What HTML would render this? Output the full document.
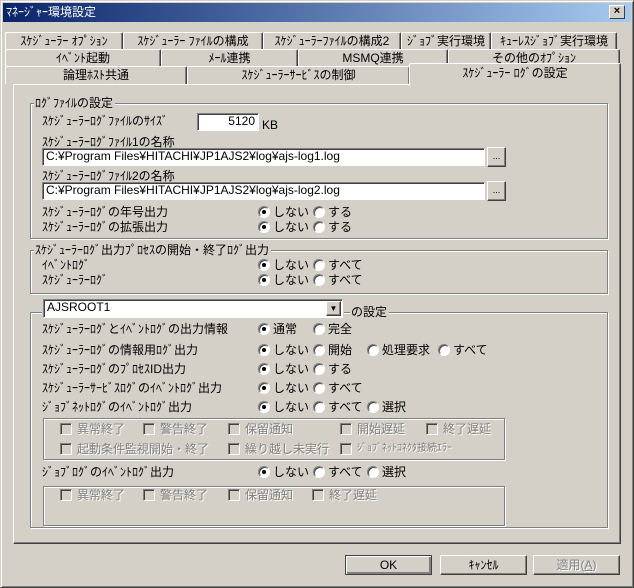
<!DOCTYPE html>
<html><head><meta charset="utf-8"><style>
*{box-sizing:border-box;margin:0;padding:0}
body{width:634px;height:588px;background:#d4d0c8;font-family:"Liberation Sans","Noto Sans CJK JP",sans-serif;font-size:12px;color:#000;position:relative;overflow:hidden}
.a{position:absolute;white-space:nowrap;line-height:14px}
.win{position:absolute;left:0;top:0;width:634px;height:588px;border:1px solid;border-color:#d4d0c8 #404040 #404040 #d4d0c8;box-shadow:inset 1px 1px #fff,inset -1px -1px #808080}
.title{position:absolute;left:3px;top:3px;width:628px;height:19px;background:linear-gradient(90deg,#0a246a,#a6caf0);color:#fff;font-size:12px;line-height:19px;padding-left:3px}
.close{position:absolute;left:609px;top:5px;width:16px;height:14px;background:#d4d0c8;border:1px solid;border-color:#fff #404040 #404040 #fff;font-size:11px;line-height:11px;text-align:center;color:#000;font-weight:bold}
.tab{position:absolute;height:18px;border:1px solid;border-color:#fff #404040 #d4d0c8 #fff;border-bottom:none;text-align:center;line-height:16px;border-radius:2px 2px 0 0;box-shadow:inset -1px 0 #808080;white-space:nowrap;overflow:hidden}
.panel{position:absolute;left:13px;top:84px;width:608px;height:460px;border:1px solid;border-color:#fff #404040 #404040 #fff;box-shadow:inset -1px -1px #808080}
.grp{position:absolute;border:1px solid #808080;box-shadow:1px 1px #fff,inset 1px 1px #fff}
.gl{position:absolute;background:#d4d0c8;padding:0 2px 0 1px;line-height:14px;white-space:nowrap}
.in{position:absolute;background:#fff;border:1px solid;border-color:#808080 #fff #fff #808080;box-shadow:inset 1px 1px #404040;line-height:15px;padding-left:3px;white-space:nowrap;overflow:hidden}
.btn{position:absolute;border:1px solid;border-color:#fff #404040 #404040 #fff;box-shadow:inset -1px -1px #808080;text-align:center;background:#d4d0c8}
.r{position:absolute;width:12px;height:12px;border-radius:50%;background:#fff;border:1px solid;border-color:#808080 #fff #fff #808080;box-shadow:inset 1px 1px #404040}
.r.on::after{content:"";position:absolute;left:3px;top:3px;width:4px;height:4px;border-radius:50%;background:#000}
.c{position:absolute;width:12px;height:12px;border:1px solid;border-color:#808080 #fff #fff #808080;box-shadow:inset 1px 1px #404040}
.g{color:#808080;text-shadow:1px 1px #fff}
</style></head><body>
<div class="win"></div>
<div class="title">ﾏﾈｰｼﾞｬｰ環境設定</div>
<div class="close">×</div>

<div class="tab" style="left:5px;top:32px;width:118px">ｽｹｼﾞｭｰﾗｰ ｵﾌﾟｼｮﾝ</div>
<div class="tab" style="left:123px;top:32px;width:140px">ｽｹｼﾞｭｰﾗｰ ﾌｧｲﾙの構成</div>
<div class="tab" style="left:263px;top:32px;width:138px">ｽｹｼﾞｭｰﾗｰﾌｧｲﾙの構成2</div>
<div class="tab" style="left:401px;top:32px;width:90px">ｼﾞｮﾌﾞ実行環境</div>
<div class="tab" style="left:491px;top:32px;width:126px">ｷｭｰﾚｽｼﾞｮﾌﾞ実行環境</div>
<div class="tab" style="left:5px;top:49px;width:156px">ｲﾍﾞﾝﾄ起動</div>
<div class="tab" style="left:161px;top:49px;width:137px">ﾒｰﾙ連携</div>
<div class="tab" style="left:298px;top:49px;width:150px">MSMQ連携</div>
<div class="tab" style="left:448px;top:49px;width:172px">その他のｵﾌﾟｼｮﾝ</div>
<div class="tab" style="left:5px;top:66px;width:182px">論理ﾎｽﾄ共通</div>
<div class="tab" style="left:187px;top:66px;width:223px">ｽｹｼﾞｭｰﾗｰｻｰﾋﾞｽの制御</div>
<div class="panel"></div>
<div class="tab" style="left:409px;top:63px;width:212px;height:23px;background:#d4d0c8;z-index:2;line-height:18px">ｽｹｼﾞｭｰﾗｰ ﾛｸﾞの設定</div>

<div class="grp" style="left:30px;top:103px;width:578px;height:136px"></div>
<div class="gl" style="left:34px;top:96px">ﾛｸﾞﾌｧｲﾙの設定</div>
<div class="a" style="left:42px;top:114px">ｽｹｼﾞｭｰﾗｰﾛｸﾞﾌｧｲﾙのｻｲｽﾞ</div>
<div class="in" style="left:197px;top:113px;width:62px;height:18px;text-align:right;padding-right:3px">5120</div>
<div class="a" style="left:262px;top:118px">KB</div>
<div class="a" style="left:42px;top:135px">ｽｹｼﾞｭｰﾗｰﾛｸﾞﾌｧｲﾙ1の名称</div>
<div class="in" style="left:42px;top:148px;width:443px;height:18px">C:¥Program Files¥HITACHI¥JP1AJS2¥log¥ajs-log1.log</div>
<div class="btn" style="left:487px;top:147px;width:19px;height:20px;line-height:16px;font-size:9px">...</div>
<div class="a" style="left:42px;top:169px">ｽｹｼﾞｭｰﾗｰﾛｸﾞﾌｧｲﾙ2の名称</div>
<div class="in" style="left:42px;top:182px;width:443px;height:18px">C:¥Program Files¥HITACHI¥JP1AJS2¥log¥ajs-log2.log</div>
<div class="btn" style="left:487px;top:181px;width:19px;height:20px;line-height:16px;font-size:9px">...</div>
<div class="a" style="left:42px;top:205px">ｽｹｼﾞｭｰﾗｰﾛｸﾞの年号出力</div>
<div class="r on" style="left:258px;top:206px"></div><div class="a" style="left:273px;top:205px">しない</div>
<div class="r" style="left:313px;top:206px"></div><div class="a" style="left:328px;top:205px">する</div>
<div class="a" style="left:42px;top:220px">ｽｹｼﾞｭｰﾗｰﾛｸﾞの拡張出力</div>
<div class="r on" style="left:258px;top:221px"></div><div class="a" style="left:273px;top:220px">しない</div>
<div class="r" style="left:313px;top:221px"></div><div class="a" style="left:328px;top:220px">する</div>

<div class="grp" style="left:30px;top:250px;width:578px;height:44px"></div>
<div class="gl" style="left:34px;top:243px">ｽｹｼﾞｭｰﾗｰﾛｸﾞ出力ﾌﾟﾛｾｽの開始・終了ﾛｸﾞ出力</div>
<div class="a" style="left:42px;top:258px">ｲﾍﾞﾝﾄﾛｸﾞ</div>
<div class="r on" style="left:258px;top:259px"></div><div class="a" style="left:273px;top:258px">しない</div>
<div class="r" style="left:313px;top:259px"></div><div class="a" style="left:328px;top:258px">すべて</div>
<div class="a" style="left:42px;top:273px">ｽｹｼﾞｭｰﾗｰﾛｸﾞ</div>
<div class="r on" style="left:258px;top:274px"></div><div class="a" style="left:273px;top:273px">しない</div>
<div class="r" style="left:313px;top:274px"></div><div class="a" style="left:328px;top:273px">すべて</div>

<div class="grp" style="left:30px;top:312px;width:578px;height:216px"></div>
<div class="in" style="left:43px;top:299px;width:300px;height:19px;box-shadow:inset 1px 1px #404040,0 0 0 1px #d4d0c8">AJSROOT1</div>
<div class="btn" style="left:326px;top:301px;width:15px;height:15px;font-size:8px;line-height:13px">▼</div>
<div class="gl" style="left:350px;top:305px">の設定</div>
<div class="a" style="left:42px;top:322px">ｽｹｼﾞｭｰﾗｰﾛｸﾞとｲﾍﾞﾝﾄﾛｸﾞの出力情報</div>
<div class="r on" style="left:258px;top:323px"></div><div class="a" style="left:273px;top:322px">通常</div>
<div class="r" style="left:313px;top:323px"></div><div class="a" style="left:328px;top:322px">完全</div>
<div class="a" style="left:42px;top:343px">ｽｹｼﾞｭｰﾗｰﾛｸﾞの情報用ﾛｸﾞ出力</div>
<div class="r on" style="left:258px;top:344px"></div><div class="a" style="left:273px;top:343px">しない</div>
<div class="r" style="left:313px;top:344px"></div><div class="a" style="left:328px;top:343px">開始</div>
<div class="r" style="left:367px;top:344px"></div><div class="a" style="left:382px;top:343px">処理要求</div>
<div class="r" style="left:438px;top:344px"></div><div class="a" style="left:453px;top:343px">すべて</div>
<div class="a" style="left:42px;top:362px">ｽｹｼﾞｭｰﾗｰﾛｸﾞのﾌﾟﾛｾｽID出力</div>
<div class="r on" style="left:258px;top:363px"></div><div class="a" style="left:273px;top:362px">しない</div>
<div class="r" style="left:313px;top:363px"></div><div class="a" style="left:328px;top:362px">する</div>
<div class="a" style="left:42px;top:381px">ｽｹｼﾞｭｰﾗｰｻｰﾋﾞｽﾛｸﾞのｲﾍﾞﾝﾄﾛｸﾞ出力</div>
<div class="r on" style="left:258px;top:382px"></div><div class="a" style="left:273px;top:381px">しない</div>
<div class="r" style="left:313px;top:382px"></div><div class="a" style="left:328px;top:381px">すべて</div>
<div class="a" style="left:42px;top:400px">ｼﾞｮﾌﾞﾈｯﾄﾛｸﾞのｲﾍﾞﾝﾄﾛｸﾞ出力</div>
<div class="r on" style="left:258px;top:401px"></div><div class="a" style="left:273px;top:400px">しない</div>
<div class="r" style="left:313px;top:401px"></div><div class="a" style="left:328px;top:400px">すべて</div>
<div class="r" style="left:367px;top:401px"></div><div class="a" style="left:382px;top:400px">選択</div>

<div class="grp" style="left:43px;top:418px;width:462px;height:42px"></div>
<div class="c" style="left:60px;top:423px"></div><div class="a g" style="left:77px;top:422px">異常終了</div>
<div class="c" style="left:143px;top:423px"></div><div class="a g" style="left:160px;top:422px">警告終了</div>
<div class="c" style="left:228px;top:423px"></div><div class="a g" style="left:245px;top:422px">保留通知</div>
<div class="c" style="left:340px;top:423px"></div><div class="a g" style="left:357px;top:422px">開始遅延</div>
<div class="c" style="left:426px;top:423px"></div><div class="a g" style="left:443px;top:422px">終了遅延</div>
<div class="c" style="left:60px;top:443px"></div><div class="a g" style="left:77px;top:442px">起動条件監視開始・終了</div>
<div class="c" style="left:228px;top:443px"></div><div class="a g" style="left:245px;top:442px">繰り越し未実行</div>
<div class="c" style="left:340px;top:443px"></div><div class="a g" style="left:357px;top:442px;font-size:10px">ｼﾞｮﾌﾞﾈｯﾄｺﾈｸﾀ接続ｴﾗｰ</div>

<div class="a" style="left:42px;top:465px">ｼﾞｮﾌﾞﾛｸﾞのｲﾍﾞﾝﾄﾛｸﾞ出力</div>
<div class="r on" style="left:258px;top:466px"></div><div class="a" style="left:273px;top:465px">しない</div>
<div class="r" style="left:313px;top:466px"></div><div class="a" style="left:328px;top:465px">すべて</div>
<div class="r" style="left:367px;top:466px"></div><div class="a" style="left:382px;top:465px">選択</div>
<div class="grp" style="left:43px;top:486px;width:462px;height:40px"></div>
<div class="c" style="left:60px;top:489px"></div><div class="a g" style="left:77px;top:488px">異常終了</div>
<div class="c" style="left:143px;top:489px"></div><div class="a g" style="left:160px;top:488px">警告終了</div>
<div class="c" style="left:228px;top:489px"></div><div class="a g" style="left:245px;top:488px">保留通知</div>
<div class="c" style="left:312px;top:489px"></div><div class="a g" style="left:329px;top:488px">終了遅延</div>

<div class="btn" style="left:345px;top:555px;width:87px;height:20px;line-height:18px;border-color:#404040;box-shadow:inset 1px 1px #fff,inset -2px -2px #808080">OK</div>
<div class="btn" style="left:440px;top:555px;width:87px;height:20px;line-height:18px">ｷｬﾝｾﾙ</div>
<div class="btn g" style="left:533px;top:555px;width:87px;height:20px;line-height:18px">適用(<u>A</u>)</div>
</body></html>
